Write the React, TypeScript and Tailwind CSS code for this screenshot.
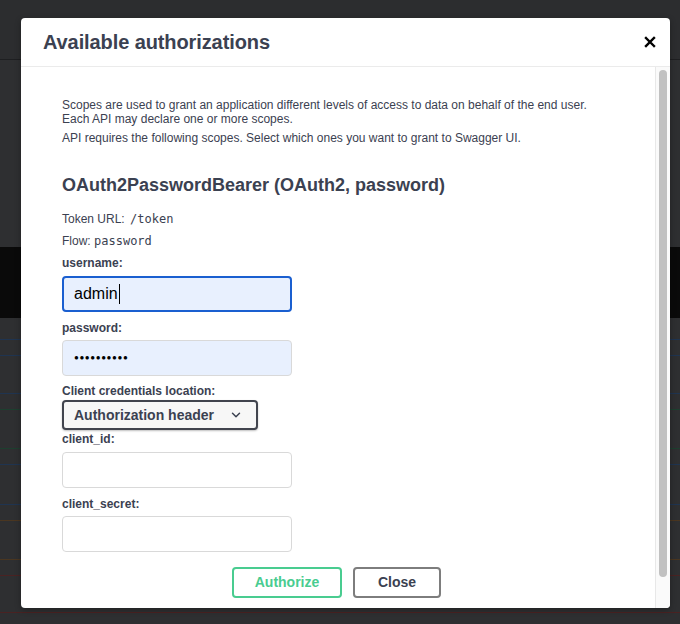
import { ChevronDown } from 'lucide-react'

// ── Backdrop (the swagger page dimmed behind the modal) ──────────────────────

const Line = ({ color }: { color: string }) => <div className={`h-px ${color}`} />

const Backdrop = () => (
  <div className="flex flex-col h-[624px] bg-[#2e2f31]">
    <div className="h-[59px] bg-[#2c2d2f] shrink-0" />
    <Line color="bg-[#1e1f21]" />
    <div className="h-[187px] shrink-0" />
    <div className="h-[71px] bg-[#0a0a0a] shrink-0" />
    <div className="h-[21px] shrink-0" />
    <Line color="bg-[#1f3450]" />
    <div className="h-[15px] shrink-0" />
    <Line color="bg-[#1f3450]" />
    <div className="h-[37px] shrink-0" />
    <Line color="bg-[#1f3450]" />
    <div className="h-[15px] shrink-0" />
    <Line color="bg-[#1d3f2f]" />
    <div className="h-[38px] shrink-0" />
    <Line color="bg-[#1d3f2f]" />
    <div className="h-[15px] shrink-0" />
    <Line color="bg-[#1f3450]" />
    <div className="h-[39px] shrink-0" />
    <Line color="bg-[#1f3450]" />
    <div className="h-[15px] shrink-0" />
    <Line color="bg-[#4a3620]" />
    <div className="h-[38px] shrink-0" />
    <Line color="bg-[#4a3620]" />
    <div className="h-[15px] shrink-0" />
    <Line color="bg-[#4a2222]" />
    <div className="h-[36px] shrink-0" />
    <Line color="bg-[#4a2222]" />
  </div>
)

// ── Form bits ────────────────────────────────────────────────────────────────

const Label = ({ children }: { children: string }) => (
  <div className="text-[12px] font-bold leading-[14px] text-[#3b4151]">{children}</div>
)

const TextBox = ({ children, variant = 'plain' }: { children?: React.ReactNode; variant?: 'focus' | 'filled' | 'plain' }) => {
  const styles = {
    focus: 'border-2 border-[#1a5fd0] bg-[#e8f0fe] pl-[10px]',
    filled: 'border border-[#d9d9d9] bg-[#e8f0fe] pl-[11px]',
    plain: 'border border-[#d9d9d9] bg-white pl-[11px]',
  }[variant]
  return (
    <div className={`w-[230px] h-[36px] rounded-[4px] flex items-center text-[16px] text-black ${styles}`}>
      {children}
    </div>
  )
}

// ── Main ─────────────────────────────────────────────────────────────────────

export default function App() {
  return (
    <div className="relative w-[680px] h-[624px] overflow-hidden font-['Liberation_Sans',Arial,sans-serif]">
      <Backdrop />

      {/* Modal */}
      <div className="absolute left-[21px] top-[18px] w-[649px] h-[590px] bg-white rounded-[4px] shadow-[0_2px_6px_rgba(0,0,0,0.3)] flex flex-col overflow-hidden">

        {/* Header */}
        <div className="h-[49px] shrink-0 flex items-center justify-between pl-[22px] pr-[14px] border-b border-[#ebebeb]">
          <h3 className="text-[20px] font-bold text-[#3b4151] tracking-[-0.1px]">Available authorizations</h3>
          <svg width="12" height="12" viewBox="0 0 12 12" className="mt-[-1px]">
            <path d="M2 2L10 10M10 2L2 10" stroke="#000" strokeWidth="2.4" strokeLinecap="square" />
          </svg>
        </div>

        {/* Body */}
        <div className="flex flex-1 min-h-0">
          <div className="flex-1 pl-[41px] pt-[31px]">
            <div className="text-[12px] leading-[14px] text-[#3b4151]">
              <p>Scopes are used to grant an application different levels of access to data on behalf of the end user.</p>
              <p>Each API may declare one or more scopes.</p>
              <p className="mt-[5px]">API requires the following scopes. Select which ones you want to grant to Swagger UI.</p>
            </div>

            <h4 className="mt-[29px] text-[18px] font-bold leading-[22px] text-[#3b4151]">
              OAuth2PasswordBearer (OAuth2, password)
            </h4>

            <p className="mt-[16px] text-[12px] leading-[14px] text-[#3b4151]">
              Token URL: <code className="font-['DejaVu_Sans_Mono',monospace] text-[12px] ml-[2px]">/token</code>
            </p>
            <p className="mt-[8px] text-[12px] leading-[14px] text-[#3b4151]">
              Flow: <code className="font-['DejaVu_Sans_Mono',monospace] text-[12px]">password</code>
            </p>

            <div className="mt-[8px]">
              <Label>username:</Label>
              <div className="mt-[6px]">
                <TextBox variant="focus">
                  admin<span className="w-px h-[20px] bg-black ml-[1px]" />
                </TextBox>
              </div>
            </div>

            <div className="mt-[9px]">
              <Label>password:</Label>
              <div className="mt-[5px]">
                <TextBox variant="filled">
                  <span className="text-[8px] tracking-[0.6px] leading-none">●●●●●●●●●●</span>
                </TextBox>
              </div>
            </div>

            <div className="mt-[8px]">
              <Label>Client credentials location:</Label>
              <div className="mt-[2px] w-[196px] h-[30px] rounded-[4px] border-2 border-[#41444e] bg-[#f7f7f7] shadow-[0_1px_2px_rgba(0,0,0,0.25)] flex items-center justify-between pl-[10px] pr-[13px]">
                <span className="text-[14px] font-bold text-[#3b4151]">Authorization header</span>
                <ChevronDown size={14} strokeWidth={2.5} className="text-[#3b4151]" />
              </div>
            </div>

            <div className="mt-[2px]">
              <Label>client_id:</Label>
              <div className="mt-[6px]">
                <TextBox />
              </div>
            </div>

            <div className="mt-[9px]">
              <Label>client_secret:</Label>
              <div className="mt-[5px]">
                <TextBox />
              </div>
            </div>

            {/* Buttons */}
            <div className="mt-[15px] flex justify-center gap-[11px] pr-[44px]">
              <button className="w-[110px] h-[31px] rounded-[4px] border-2 border-[#49cc90] text-[14px] font-bold text-[#49cc90]">
                Authorize
              </button>
              <button className="w-[88px] h-[31px] rounded-[4px] border-2 border-[#7d7d7d] text-[14px] font-bold text-[#3b4151]">
                Close
              </button>
            </div>
          </div>

          {/* Scrollbar */}
          <div className="w-[15px] shrink-0 bg-[#fafafa] border-l border-[#e8e8e8] pt-[3px] pb-[30px] flex justify-center">
            <div className="w-[8px] h-[507px] rounded-full bg-[#c1c1c1]" />
          </div>
        </div>
      </div>
    </div>
  )
}
